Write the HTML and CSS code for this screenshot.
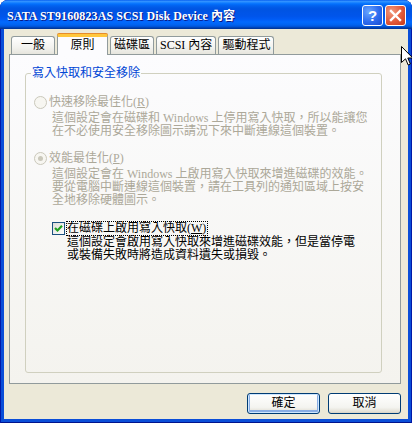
FILE: index.html
```html
<!DOCTYPE html>
<html lang="zh-Hant">
<head>
<meta charset="utf-8">
<title>SATA ST9160823AS SCSI Disk Device 內容</title>
<link rel="stylesheet" href="styles.css">
</head>
<body>
<div class="window">
  <div class="titlebar">
    <span class="title">SATA ST9160823AS SCSI Disk Device 內容</span>
    <div class="tbtns">
      <span class="tb help">?</span>
      <span class="tb close"><svg width="13" height="13" viewBox="0 0 13 13"><path d="M2 2 L11 11 M11 2 L2 11" stroke="#fff" stroke-width="2.4" stroke-linecap="square"/></svg></span>
    </div>
  </div>
  <div class="client">
    <div class="tabs">
      <div class="tab">一般</div>
      <div class="tab active">原則</div>
      <div class="tab">磁碟區</div>
      <div class="tab">SCSI 內容</div>
      <div class="tab">驅動程式</div>
    </div>
    <div class="panel">
      <fieldset class="group">
        <legend>寫入快取和安全移除</legend>
        <div class="inner">
          <div class="opt first disabled"><span class="radio"></span><span class="lbl">快速移除最佳化(<u>R</u>)</span></div>
          <p class="desc disabled">這個設定會在磁碟和 Windows 上停用寫入快取，所以能讓您<br>在不必使用安全移除圖示請況下來中斷連線這個裝置。</p>
          <div class="opt second disabled"><span class="radio checked"></span><span class="lbl">效能最佳化(<u>P</u>)</span></div>
          <p class="desc disabled">這個設定會在 Windows 上啟用寫入快取來增進磁碟的效能。<br>要從電腦中斷連線這個裝置，請在工具列的通知區域上按安<br>全地移除硬體圖示。</p>
          <div class="chkrow"><span class="check"><svg width="11" height="11" viewBox="0 0 11 11"><path d="M2 5 L4.5 7.5 L9 2.8" fill="none" stroke="#21A121" stroke-width="2.2"/></svg></span><span class="focus">在磁碟上啟用寫入快取(<u>W</u>)</span></div>
          <p class="desc desc3">這個設定會啟用寫入快取來增進磁碟效能，但是當停電<br>或裝備失敗時將造成資料遺失或損毀。</p>
        </div>
      </fieldset>
    </div>
    <div class="buttons">
      <button class="btn default">確定</button>
      <button class="btn">取消</button>
    </div>
  </div>
</div>
<svg class="cursor" width="13" height="21" viewBox="0 0 13 21"><path d="M0.5 0.5 L0.5 16.5 L4.5 12.8 L7.2 19 L9.4 18 L6.8 12 L11.8 12 Z" fill="#fff" stroke="#000" stroke-width="1"/></svg>
</body>
</html>
```
FILE: styles.css
```css
* { box-sizing: border-box; }
html, body { margin: 0; padding: 0; background: #fff; }
body {
  width: 412px;
  height: 423px;
  overflow: hidden;
  position: relative;
  font-family: "Liberation Serif", "Noto Sans CJK TC", serif;
  font-size: 12px;
  color: #000;
}
.window {
  width: 412px;
  height: 423px;
  display: flex;
  flex-direction: column;
  background: #0A4ED8;
  border-radius: 8px 8px 0 0;
  overflow: hidden;
  box-shadow: inset 1px 0 #0019A8, inset -1px 0 #0019A8, inset 0 -1px #00138C;
}
.titlebar {
  height: 29px;
  flex: none;
  display: flex;
  align-items: center;
  justify-content: space-between;
  padding: 0 6px 0 7px;
  background: linear-gradient(#0058EE 0%, #3593FF 4%, #288EFF 7%, #127DFF 10%, #036FFC 14%, #0262EE 20%, #0057E5 28%, #0054E3 34%, #0055EB 56%, #005BF5 66%, #026AFE 76%, #0062EF 86%, #0052D6 92%, #0040AB 96%, #003092 100%);
}
.title {
  color: #fff;
  font-weight: bold;
  font-size: 12px;
  letter-spacing: 0.1px;
  text-shadow: 1px 1px #0A1883;
  white-space: nowrap;
}
.tbtns { display: flex; gap: 2px; margin-top: 1px; }
.tb {
  width: 21px;
  height: 21px;
  border: 1px solid #fff;
  border-radius: 3px;
  display: flex;
  align-items: center;
  justify-content: center;
  color: #fff;
  font-family: "Liberation Sans", sans-serif;
  font-weight: bold;
  font-size: 15px;
}
.help { background: radial-gradient(circle at 30% 30%, #6AA6FF 0, #2D6BEE 55%, #1A4CD0 100%); }
.close { background: radial-gradient(circle at 30% 30%, #F29A7E 0, #E0593A 55%, #C5381A 100%); }
.client {
  flex: 1;
  margin: 0 4px 4px;
  background: #ECE9D8;
  display: flex;
  flex-direction: column;
  padding: 5px 7px 0 5px;
}
.tabs {
  display: flex;
  align-items: flex-end;
  gap: 2px;
  padding-left: 2px;
  margin-bottom: -1px;
  height: 21px;
  position: relative;
  z-index: 1;
}
.tab {
  height: 18px;
  margin-bottom: 1px;
  min-width: 44px;
  padding: 0 3px;
  border: 1px solid #919B9C;
  border-bottom: none;
  border-radius: 3px 3px 0 0;
  background: linear-gradient(#FFFFFF, #F3F3EF 60%, #E6E5DD);
  text-align: center;
  line-height: 17px;
  white-space: nowrap;
}
.tab.active {
  height: 21px;
  margin-bottom: 0;
  min-width: 51px;
  background: #FCFCFE;
  border-top: 3px solid #FFC73C;
  box-shadow: 0 -1px #E68B2C;
  line-height: 16px;
  border-radius: 2px 2px 0 0;
}
.panel {
  height: 330px;
  flex: none;
  border: 1px solid #919B9C;
  background: linear-gradient(#FCFCFE, #F4F3EE);
  display: flex;
  flex-direction: column;
}
.group {
  flex: 1;
  margin: 11px 18px 10px 15px;
  padding: 0;
  border: 1px solid #D0D0BF;
  border-radius: 3px;
  min-width: 0;
}
.group legend {
  margin-left: 5px;
  padding: 0 1px;
  color: #0046D5;
  line-height: 14px;
}
.inner { padding-left: 8px; }
.opt {
  display: flex;
  align-items: center;
  height: 13px;
  line-height: 13px;
}
.opt.first { margin-top: 16px; }
.opt.second { margin-top: 14px; }
.disabled { color: #ACA899; }
.radio {
  width: 13px;
  height: 13px;
  border-radius: 50%;
  border: 1px solid #CAC8BB;
  background: #F7F6F1;
  display: flex;
  align-items: center;
  justify-content: center;
  flex: none;
}
.radio.checked::after {
  content: "";
  width: 5px;
  height: 5px;
  border-radius: 50%;
  background: #CAC8BB;
}
.lbl { margin-left: 2px; }
.desc {
  margin: 3px 0 0 18px;
  line-height: 13px;
  white-space: nowrap;
}
.chkrow {
  display: flex;
  align-items: center;
  margin: 14px 0 0 18px;
  height: 15px;
}
.check {
  width: 13px;
  height: 13px;
  border: 1px solid #1C5180;
  background: linear-gradient(135deg, #DCDCD7, #FFFFFF);
  display: flex;
  align-items: center;
  justify-content: center;
  flex: none;
}
.focus {
  margin-left: 1px;
  border: 1px dotted #000;
  line-height: 13px;
  padding: 0 1px 0 0;
}
.desc3 { margin: 0 0 0 33px; color: #000; }
.buttons {
  display: flex;
  justify-content: flex-end;
  gap: 8px;
  margin-top: 9px;
}
.btn {
  width: 73px;
  height: 21px;
  border: 1px solid #003C74;
  border-radius: 3px;
  background: linear-gradient(#FFFFFF, #F4F4F0 70%, #E3E0D6 92%, #D6D0C5);
  font-family: inherit;
  font-size: 12px;
  color: #000;
  padding: 0;
  line-height: 17px;
}
.btn.default {
  box-shadow: inset 0 0 0 1px #CEE7FF, inset 0 -1px 0 2px #89ADE4;
}
.cursor {
  position: absolute;
  left: 401px;
  top: 46px;
}
```
